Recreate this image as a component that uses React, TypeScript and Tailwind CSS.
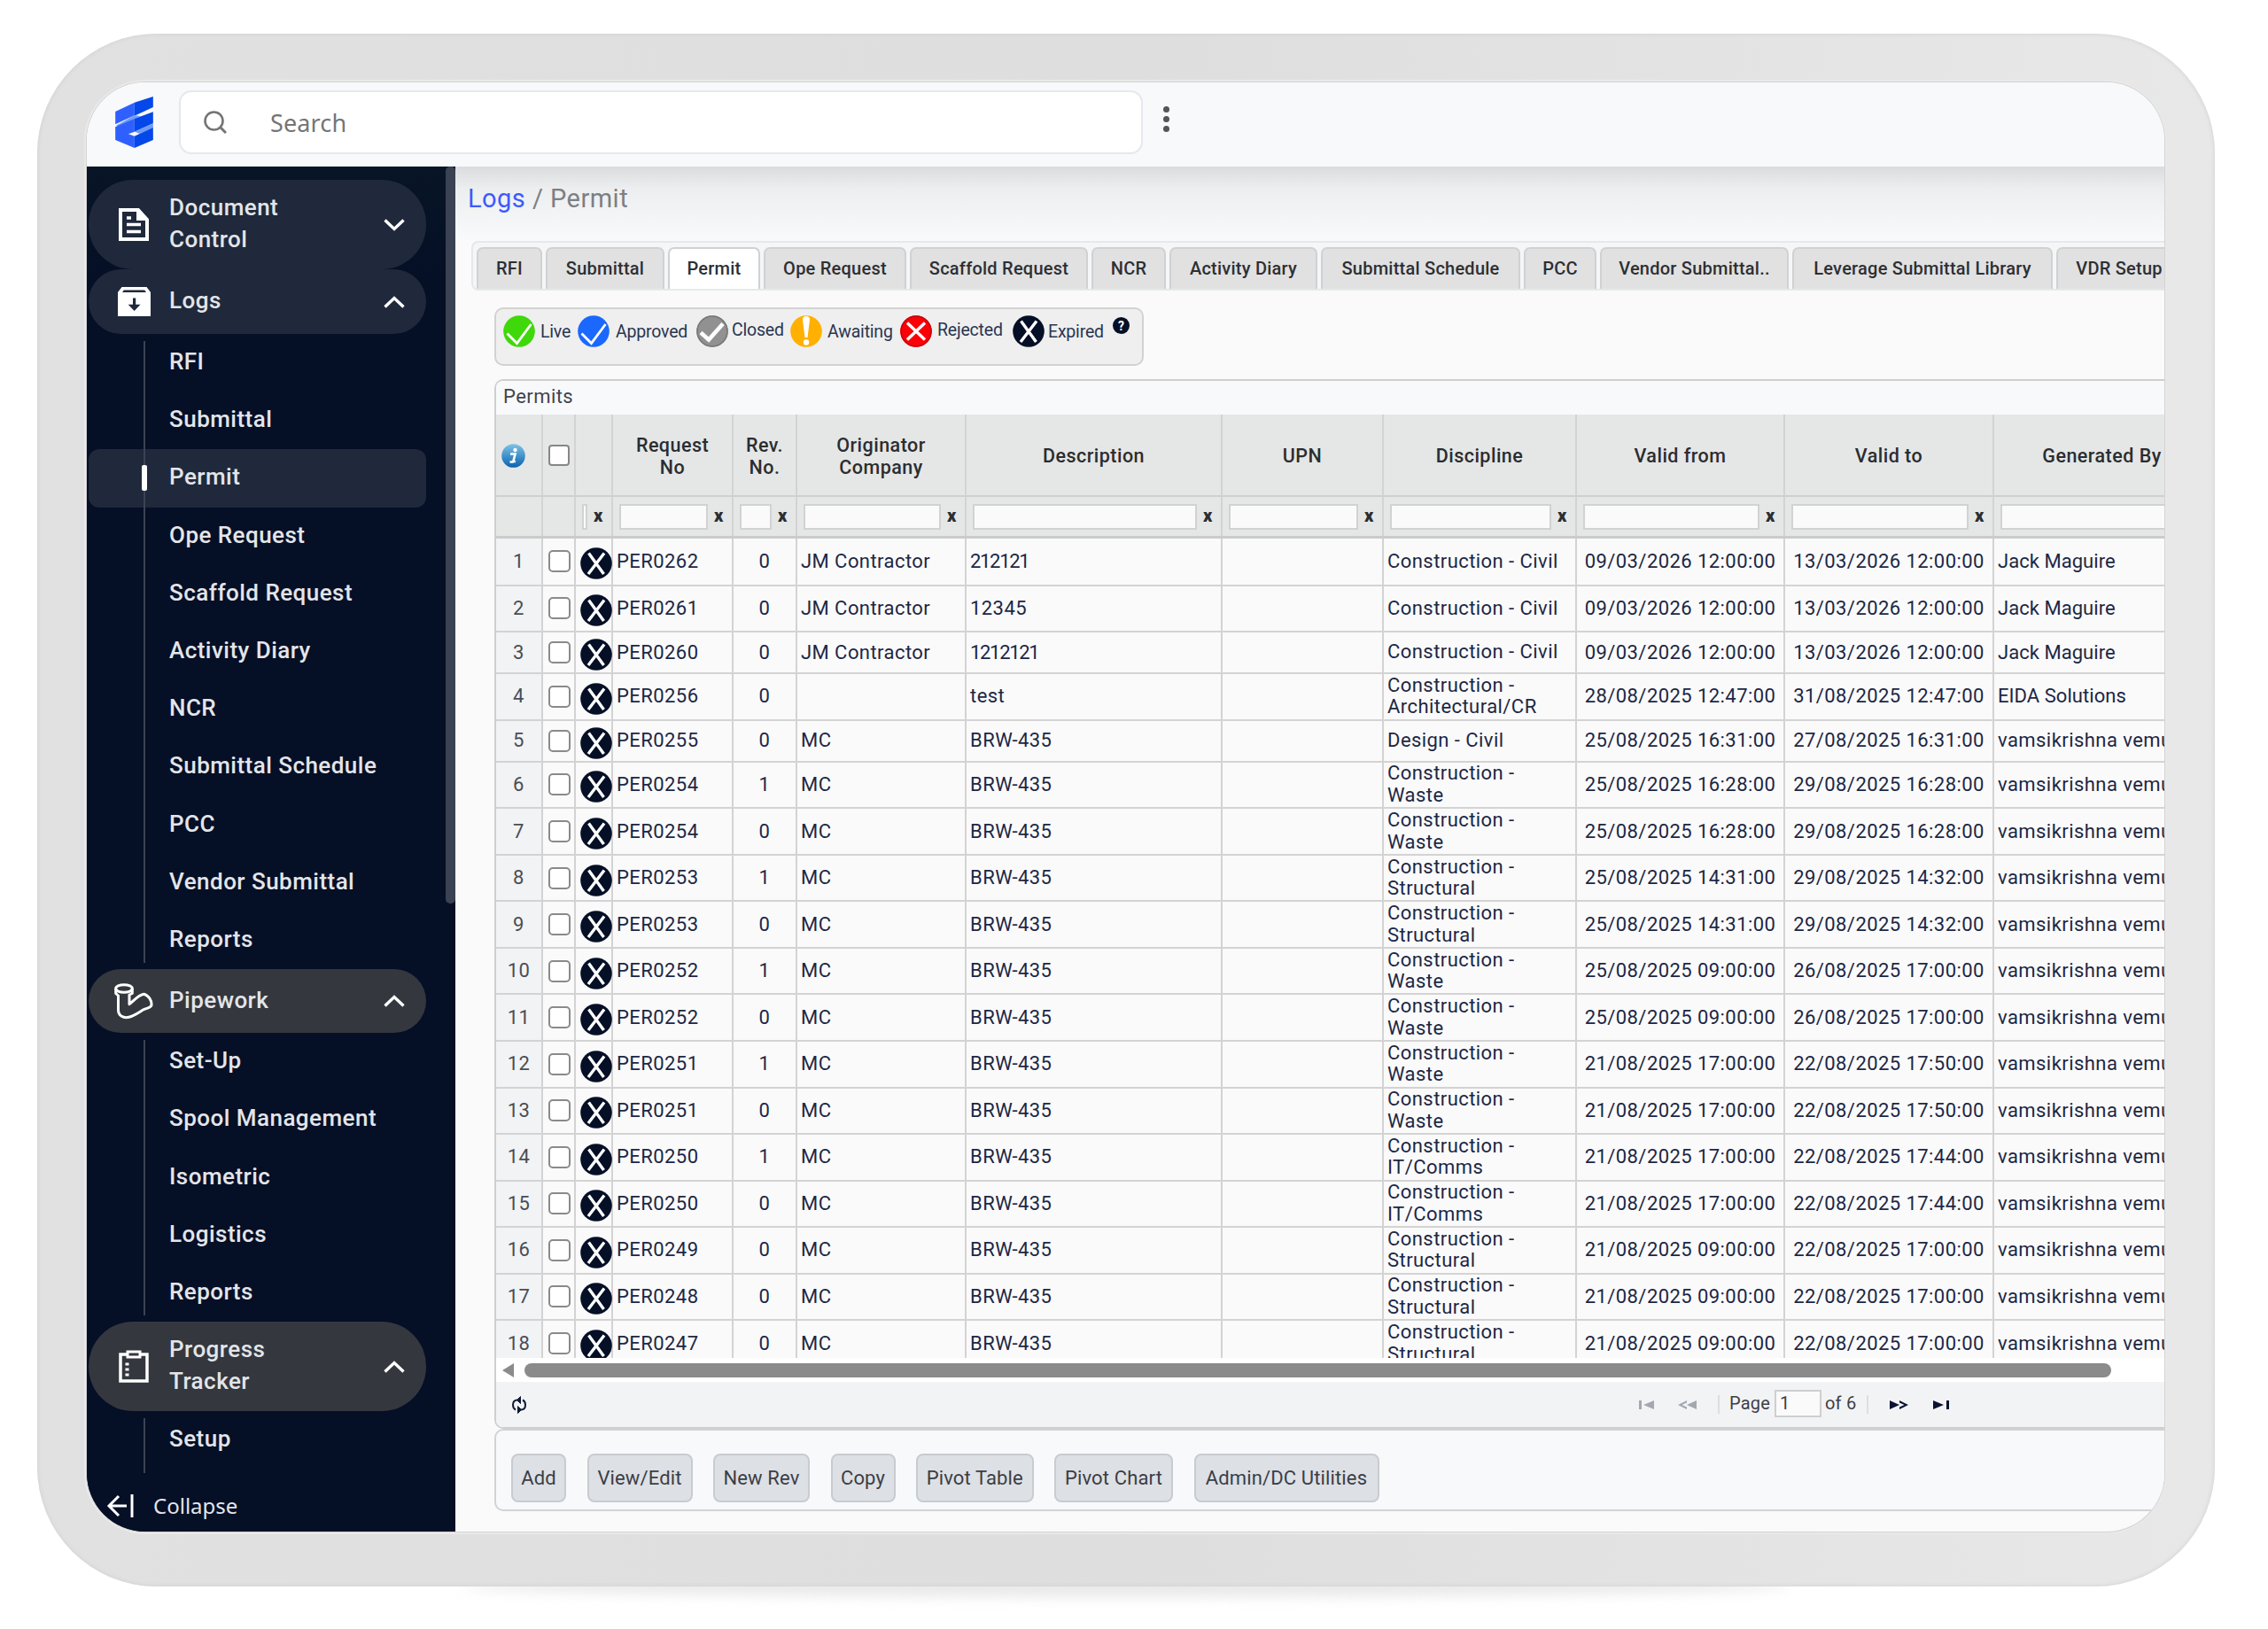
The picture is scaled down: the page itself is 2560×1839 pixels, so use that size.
import { ReactNode } from "react";
import clsx from "clsx";

const Logo = () => (
  <svg viewBox="0 0 128 174" className="h-[58px] w-[43px]">
    <path d="M0 51 65 20V64L0 94z" fill="#2f60ff" />
    <path d="M65 20 128 0V36L65 65z" fill="#0448ea" />
    <path d="M3 98 65 64 86 66 65 76 8 102z" fill="#6f9bf7" />
    <path d="M0 103 65 75V119L44 127 65 134V174L0 147z" fill="#2f60ff" />
    <path d="M65 75 128 52V91L65 119z" fill="#0448ea" />
    <path d="M65 119 128 91V106L65 134 86 127z" fill="#6f9bf7" />
    <path d="M65 134 128 105V147L65 174z" fill="#0448ea" />
  </svg>
);

const DocumentIcon = () => (
  <svg viewBox="0 0 34 37" className="h-[37px] w-[34px]" fill="none" stroke="#fff" strokeWidth="4">
    <path d="M2 2h20l10 11v22H2z" />
    <path d="M20 0v14h14L22 0z" fill="#fff" stroke="none" />
    <path d="M9 11h5M9 18.5h16M9 26.500h16" strokeWidth="3.600" />
  </svg>
);

const ArchiveIcon = () => (
  <svg viewBox="0 0 37 33" className="h-[33px] w-[37px]">
    <path d="M4.500 0h28L37 6v27H0V6z" fill="#fff" />
    <path d="M5 6l1.800-2.500h23.400L32 6z" fill="#1f293b" />
    <path d="M17 12.500h3.200v7.200h5.300L18.600 27l-6.900-7.300H17z" fill="#1f293b" />
  </svg>
);

const PipeIcon = () => (
  <svg viewBox="0 0 44 41" className="h-[41px] w-[44px]" fill="none" stroke="#fff" strokeWidth="3" strokeLinejoin="round">
    <ellipse cx="11" cy="6" rx="9.300" ry="4.300" />
    <path d="M1.700 6v5.500L4.500 14v16c0 7 6 9.800 12 8.300 6-1.600 11-5.300 16-8.300 3-1.700 9-1.800 9.500-5.500.4-5-3.500-11-8.500-12.300-6 .8-10 6-16.500 11.500V13l3.300-1.500V6" />
  </svg>
);

const ClipboardIcon = () => (
  <svg viewBox="0 0 34 37" className="h-[37px] w-[34px]" fill="none" stroke="#fff" strokeWidth="3.500">
    <path d="M2 5h30v30H2z" />
    <path d="M10 2h14v6H10z" fill="#34373e" strokeWidth="3" />
    <path d="M7.500 16h4M7.500 22h4M7.500 28h4" strokeWidth="3" />
  </svg>
);

const Chevron = ({ up }: { up?: boolean }) => (
  <svg viewBox="0 0 24 14" className="h-[14px] w-[24px]" fill="none" stroke="#fff" strokeWidth="3.400">
    <path d={up ? "M1.500 12.500 12 2.500l10.500 10" : "M1.500 1.500 12 11.500l10.500-10"} />
  </svg>
);

const StatusIcon = ({ kind }: { kind: string }) => {
  const fills: Record<string, string> = {
    Live: "#3fd80a",
    Approved: "#1b68ff",
    Closed: "#919191",
    Awaiting: "#ffb000",
    Rejected: "#fb0007",
    Expired: "#050f26",
  };
  return (
    <svg viewBox="0 0 36 36" className="h-[36px] w-[36px] shrink-0" fill="none" stroke="#fff">
      <circle cx="18" cy="18" r="17.800" fill={fills[kind]} stroke="none" />
      {(kind === "Live" || kind === "Approved") && <path d="M4.500 20.500 15.500 31.500 31.500 10" strokeWidth="2.800" />}
      {kind === "Closed" && (
        <>
          <circle cx="18" cy="18" r="17" stroke="#777" strokeWidth="1.500" />
          <path d="M5 19.500 14 27.500 30 9.500" strokeWidth="4.600" />
        </>
      )}
      {kind === "Awaiting" && (
        <>
          <path d="M14 5a4 4 0 0 1 8 0l-2.500 20h-3z" fill="#fff" stroke="none" />
          <circle cx="18" cy="30.500" r="3.200" fill="#fff" stroke="none" />
        </>
      )}
      {kind === "Rejected" && (
        <>
          <circle cx="18" cy="18" r="17" stroke="#c4060c" strokeWidth="1.500" />
          <path d="M8 8.500 28 27.500M28 8.500 8 27.500" strokeWidth="3.400" />
        </>
      )}
      {kind === "Expired" && <path d="M9.500 6.500 26.500 30M27 6.500 9 30" strokeWidth="3.400" />}
    </svg>
  );
};

interface NavGroup {
  label: string;
  icon: ReactNode;
  pill: string;
  open: boolean;
  items: string[];
}

const groups: NavGroup[] = [
  { label: "Document Control", icon: <DocumentIcon />, pill: "h-[101px] bg-[#1f293b]", open: false, items: [] },
  {
    label: "Logs",
    icon: <ArchiveIcon />,
    pill: "h-[73px] bg-[#1f293b]",
    open: true,
    items: ["RFI", "Submittal", "Permit", "Ope Request", "Scaffold Request", "Activity Diary", "NCR", "Submittal Schedule", "PCC", "Vendor Submittal", "Reports"],
  },
  {
    label: "Pipework",
    icon: <PipeIcon />,
    pill: "h-[72px] bg-[#34373e]",
    open: true,
    items: ["Set-Up", "Spool Management", "Isometric", "Logistics", "Reports"],
  },
  { label: "Progress Tracker", icon: <ClipboardIcon />, pill: "h-[101px] bg-[#34373e]", open: true, items: ["Setup"] },
];

const tabs = [
  { label: "RFI", size: "w-[74px]" },
  { label: "Submittal", size: "w-[134px]" },
  { label: "Permit", size: "w-[104px]", active: true },
  { label: "Ope Request", size: "w-[161px]" },
  { label: "Scaffold Request", size: "w-[201px]" },
  { label: "NCR", size: "w-[84px]" },
  { label: "Activity Diary", size: "w-[167px]" },
  { label: "Submittal Schedule", size: "w-[225px]" },
  { label: "PCC", size: "w-[82px]" },
  { label: "Vendor Submittal..", size: "w-[213px]" },
  { label: "Leverage Submittal Library", size: "w-[294px]" },
  { label: "VDR Setup", size: "w-[142px]" },
];

const legend = [
  { label: "Live", size: "w-[84px] gap-[6px]" },
  { label: "Approved", size: "w-[134px] gap-[7px]" },
  { label: "Closed", size: "w-[106px] gap-[4px]", raised: true },
  { label: "Awaiting", size: "w-[124px] gap-[6px]" },
  { label: "Rejected", size: "w-[127px] gap-[6px]", raised: true },
  { label: "Expired", size: "w-[113px] gap-[4px]" },
];

const grid =
  "grid w-[1936px] grid-cols-[53px_37px_42px_136px_72px_191px_289px_182px_218px_235px_236px_245px]";

const columns = [
  "Request\nNo",
  "Rev.\nNo.",
  "Originator\nCompany",
  "Description",
  "UPN",
  "Discipline",
  "Valid from",
  "Valid to",
  "Generated By",
];

const vk = "vamsikrishna vemuri";
const tall = "h-[52.56px]";

const rows: string[][] = [
  ["PER0262", "0", "JM Contractor", "212121", "Construction - Civil", "09/03/2026 12:00:00", "13/03/2026 12:00:00", "Jack Maguire", "h-[53.6px]"],
  ["PER0261", "0", "JM Contractor", "12345", "Construction - Civil", "09/03/2026 12:00:00", "13/03/2026 12:00:00", "Jack Maguire", tall],
  ["PER0260", "0", "JM Contractor", "1212121", "Construction - Civil", "09/03/2026 12:00:00", "13/03/2026 12:00:00", "Jack Maguire", "h-[47px]"],
  ["PER0256", "0", "", "test", "Construction -\nArchitectural/CR", "28/08/2025 12:47:00", "31/08/2025 12:47:00", "EIDA Solutions", tall],
  ["PER0255", "0", "MC", "BRW-435", "Design - Civil", "25/08/2025 16:31:00", "27/08/2025 16:31:00", vk, "h-[47px]"],
  ["PER0254", "1", "MC", "BRW-435", "Construction -\nWaste", "25/08/2025 16:28:00", "29/08/2025 16:28:00", vk, tall],
  ["PER0254", "0", "MC", "BRW-435", "Construction -\nWaste", "25/08/2025 16:28:00", "29/08/2025 16:28:00", vk, tall],
  ["PER0253", "1", "MC", "BRW-435", "Construction -\nStructural", "25/08/2025 14:31:00", "29/08/2025 14:32:00", vk, tall],
  ["PER0253", "0", "MC", "BRW-435", "Construction -\nStructural", "25/08/2025 14:31:00", "29/08/2025 14:32:00", vk, tall],
  ["PER0252", "1", "MC", "BRW-435", "Construction -\nWaste", "25/08/2025 09:00:00", "26/08/2025 17:00:00", vk, tall],
  ["PER0252", "0", "MC", "BRW-435", "Construction -\nWaste", "25/08/2025 09:00:00", "26/08/2025 17:00:00", vk, tall],
  ["PER0251", "1", "MC", "BRW-435", "Construction -\nWaste", "21/08/2025 17:00:00", "22/08/2025 17:50:00", vk, tall],
  ["PER0251", "0", "MC", "BRW-435", "Construction -\nWaste", "21/08/2025 17:00:00", "22/08/2025 17:50:00", vk, tall],
  ["PER0250", "1", "MC", "BRW-435", "Construction -\nIT/Comms", "21/08/2025 17:00:00", "22/08/2025 17:44:00", vk, tall],
  ["PER0250", "0", "MC", "BRW-435", "Construction -\nIT/Comms", "21/08/2025 17:00:00", "22/08/2025 17:44:00", vk, tall],
  ["PER0249", "0", "MC", "BRW-435", "Construction -\nStructural", "21/08/2025 09:00:00", "22/08/2025 17:00:00", vk, tall],
  ["PER0248", "0", "MC", "BRW-435", "Construction -\nStructural", "21/08/2025 09:00:00", "22/08/2025 17:00:00", vk, tall],
  ["PER0247", "0", "MC", "BRW-435", "Construction -\nStructural", "21/08/2025 09:00:00", "22/08/2025 17:00:00", vk, tall],
];

const actions = [
  { label: "Add", size: "w-[62px]" },
  { label: "View/Edit", size: "w-[119px]" },
  { label: "New Rev", size: "w-[109px]" },
  { label: "Copy", size: "w-[73px]" },
  { label: "Pivot Table", size: "w-[132.5px]" },
  { label: "Pivot Chart", size: "w-[134px]" },
  { label: "Admin/DC Utilities", size: "w-[209px]" },
];

const Header = () => (
  <header className="flex h-[95px] shrink-0 items-start bg-[#f8f9fb]">
    <div className="ml-[32px] mt-[16px] w-[43px]">
      <Logo />
    </div>
    <div className="ml-[29px] mt-[9px] flex h-[72px] w-[1088px] items-center rounded-[14px] border-2 border-[#e6e8ed] bg-white">
      <svg viewBox="0 0 26 26" className="ml-[26px] h-[26px] w-[26px]" fill="none" stroke="#757575" strokeWidth="2.600">
        <circle cx="11.500" cy="11.500" r="10" />
        <path d="M18.500 18.500 25 25" strokeWidth="3" />
      </svg>
      <span className="ml-[49px] font-['Noto_Sans'] text-[27px] leading-none tracking-[0.005em] text-[#757575]">Search</span>
    </div>
    <div className="ml-[23px] mt-[27px] flex flex-col gap-[4px]">
      <i className="h-[7px] w-[7px] rounded-full bg-[#555]" />
      <i className="h-[7px] w-[7px] rounded-full bg-[#555]" />
      <i className="h-[7px] w-[7px] rounded-full bg-[#555]" />
    </div>
  </header>
);

const Sidebar = () => (
  <aside className="relative flex w-[416px] shrink-0 flex-col overflow-hidden bg-[#050f26] bg-linear-to-b from-[#081526] to-[#050f26] to-[8%] text-[26px] font-medium tracking-[0.018em] text-[#e3e5e9]">
    <nav className="ml-[2px] mt-[15px] w-[381px]">
      {groups.map((g) => (
        <div key={g.label}>
          <div className={clsx("flex items-center rounded-[50px]", g.pill)}>
            <div className="flex w-[91px] shrink-0 justify-center pl-[11px]">{g.icon}</div>
            <span className="w-[160px] pb-[3px] leading-[36px]">{g.label}</span>
            <div className="ml-[82px]">
              <Chevron up={g.open} />
            </div>
          </div>
          {g.items.length > 0 && (
            <ul className="relative">
              <li
                className={clsx(
                  "absolute left-[62px] top-[8px] w-[2px] bg-[#3b4354]",
                  g.items.length === 1 ? "-bottom-[5px]" : "bottom-[7px]"
                )}
              />
              {g.items.map((item) => (
                <li
                  key={item}
                  className={clsx(
                    "flex h-[65.2px] items-center rounded-[12px] pb-[2px] pl-[91px]",
                    item === "Permit" && "bg-[#1f293b]"
                  )}
                >
                  {item === "Permit" && <i className="absolute left-[60px] h-[29px] w-[6px] translate-y-[1px] rounded-[2px] bg-white" />}
                  {item}
                </li>
              ))}
            </ul>
          )}
        </div>
      ))}
    </nav>
    <div className="mt-auto flex h-[57px] items-center pb-[1px] pl-[22px]">
      <svg viewBox="0 0 31 26" className="h-[26px] w-[31px]" fill="none" stroke="#fff" strokeWidth="3">
        <path d="M14 2 3 13l11 11M3 13h20M29 0v26" />
      </svg>
      <span className="ml-[22px] font-['Noto_Sans'] text-[24px] font-normal leading-none tracking-normal">Collapse</span>
    </div>
    <div className="absolute right-0 top-0 h-[832px] w-[11px] rounded-[5px] bg-[#3a4254]" />
  </aside>
);

const Tabs = () => (
  <div className="ml-[18px] flex h-[56px] shrink-0 gap-[4px] overflow-hidden rounded-l-[8px] border-2 border-r-0 border-[#e6e9e9] bg-[#f5f6f7] pl-[4px] pt-[5px] text-[20px] font-medium tracking-[0.012em] text-[#2e2f33]">
    {tabs.map((tab) => (
      <div
        key={tab.label}
        className={clsx(
          "flex h-[49px] shrink-0 items-center justify-center whitespace-nowrap rounded-t-[7px] border-2 border-b-0 border-[#d0d1d2] pb-[3px]",
          tab.active ? "bg-white" : "bg-[#e1e1e1]",
          tab.size
        )}
      >
        {tab.label}
      </div>
    ))}
  </div>
);

const Legend = () => (
  <div className="ml-[44px] mt-[19px] flex h-[66px] w-[733px] shrink-0 rounded-[10px] border-2 border-[#d2d2d2] bg-[#efefef] pl-[8px] pt-[7px] text-[19.5px] tracking-[-0.01em] text-[#2a3652]">
    {legend.map((l) => (
      <div key={l.label} className={clsx("flex h-[36px] items-center", l.size)}>
        <StatusIcon kind={l.label} />
        <span className={l.raised ? "-translate-y-[1px]" : "translate-y-[1px]"}>{l.label}</span>
      </div>
    ))}
    <span className="mt-[2px] flex h-[19px] w-[19px] items-center justify-center rounded-full bg-[#050f26] text-[14px] font-bold leading-none text-white">?</span>
  </div>
);

const InfoIcon = () => (
  <svg viewBox="0 0 27 27" className="h-[27px] w-[27px]">
    <defs>
      <linearGradient id="info" x1="0" y1="0" x2="0" y2="1">
        <stop offset="0" stopColor="#7fc3e6" />
        <stop offset="1" stopColor="#0a62b0" />
      </linearGradient>
    </defs>
    <circle cx="13.500" cy="13.500" r="13.300" fill="url(#info)" />
    <circle cx="15.500" cy="7" r="2.200" fill="#fff" />
    <path d="M10 11.500h5.500l-2.200 8.500h2.500M9.500 20.500h4" fill="none" stroke="#fff" strokeWidth="2.600" />
  </svg>
);

const cell = "flex h-full items-center border-r-2 border-[#d3d3d3]";

const TableHead = () => (
  <>
    <div className={clsx(grid, "h-[93px] border-b-2 border-[#cfcfcf] bg-[#e5e7e6] text-[21.5px] font-medium tracking-[0.022em] text-[#2b2d31]")}>
      <div className={clsx(cell, "pl-[6px] pt-[1px]")}>
        <InfoIcon />
      </div>
      <div className={clsx(cell, "justify-center pl-[1px]")}>
        <i className="h-[24px] w-[24px] rounded-[4px] border-2 border-[#868686] bg-white" />
      </div>
      <div className={cell} />
      {columns.map((c) => (
        <div key={c} className={clsx(cell, "justify-center whitespace-pre pt-[2px] text-center leading-[25px]")}>
          {c}
        </div>
      ))}
    </div>
    <div className={clsx(grid, "h-[47px] border-b-3 border-[#cbcbcb] bg-[#e5e7e6]")}>
      <div className={cell} />
      <div className={cell} />
      {["status", ...columns].map((c) => (
        <div key={c} className={clsx(cell, "pl-[7px]")}>
          <i className="h-[29px] min-w-[5px] flex-1 border-2 border-[#d2d2d2] bg-[#fafafa]" />
          <span className="w-[27px] shrink-0 pb-[2px] pl-[7px] text-[20px] font-black leading-none text-[#2b2d31]">x</span>
        </div>
      ))}
    </div>
  </>
);

const TableBody = () => (
  <div className="h-[925px] overflow-hidden text-[22px] font-[450] tracking-[0.02em] text-[#1c2745]">
    {rows.map((r, i) => (
      <div key={i} className={clsx(grid, "border-b-2 border-[#d3d3d3] bg-[#fafafa]", r[8])}>
        <div className={clsx(cell, "justify-center bg-[#f1f3f5] pb-[1px] text-[#4a4d54]")}>{i + 1}</div>
        <div className={clsx(cell, "justify-center pl-[1px]")}>
          <i className="h-[25px] w-[25px] rounded-[5px] border-2 border-[#8a8a8a] bg-white" />
        </div>
        <div className={clsx(cell, "pl-[5px] pt-[5px]")}>
          <StatusIcon kind="Expired" />
        </div>
        <div className={clsx(cell, "pb-[1px] pl-[4px]")}>{r[0]}</div>
        <div className={clsx(cell, "justify-center pb-[1px]")}>{r[1]}</div>
        <div className={clsx(cell, "pb-[1px] pl-[4px]")}>{r[2]}</div>
        <div className={clsx(cell, "pb-[1px] pl-[4px]", i !== 1 && i < 3 && "tracking-[-0.06em]")}>{r[3]}</div>
        <div className={cell} />
        <div className={clsx(cell, "whitespace-pre pl-[4px] leading-[24.5px]")}>{r[4]}</div>
        <div className={clsx(cell, "justify-center whitespace-nowrap pb-[1px]")}>{r[5]}</div>
        <div className={clsx(cell, "justify-center whitespace-nowrap pb-[1px]")}>{r[6]}</div>
        <div className={clsx(cell, "whitespace-nowrap pb-[1px] pl-[4px]", i < 4 && "tracking-[0.002em]")}>{r[7]}</div>
      </div>
    ))}
  </div>
);

const Pager = () => (
  <div className="flex h-[51px] items-center bg-[#f2f3f5] text-[20px] tracking-[0.01em] text-[#3d4047]">
    <svg viewBox="0 0 18 20" className="ml-[17px] h-[20px] w-[18px]" fill="none" stroke="#111b36" strokeWidth="2">
      <path d="M7 4.500C3 4.500 2 7 2 10s1 4.500 3 5.500M11 15.500c4 0 5-2.500 5-5.500s-1-4.500-3-5.500" />
      <path d="M6.500 4.500h4M10.500.500v8l-4-4zM11.500 15.500h-4M7.500 11.500v8l4-4z" fill="#111b36" strokeWidth="1" />
    </svg>
    <svg viewBox="0 0 17 10" className="ml-[1255px] h-[10px] w-[17px]" fill="#a3a7b0">
      <path d="M0 0h3v10H0zM17 0v10L5 5z" />
    </svg>
    <svg viewBox="0 0 21 10" className="ml-[27px] h-[10px] w-[21px]" fill="#a3a7b0">
      <path d="M21 0v10L10 5zM10 0v2.500L4.500 5 10 7.500V10L0 5z" />
    </svg>
    <i className="ml-[24px] h-[21px] w-[2px] bg-[#dcdee1]" />
    <span className="ml-[11px] w-[47px] pb-[4px]">Page</span>
    <span className="ml-[4px] flex h-[31px] w-[53px] -translate-y-[1px] items-center border-2 border-[#cfcfcf] bg-[#fafafa] pb-[2px] pl-[4px]">1</span>
    <span className="ml-[4px] w-[38px] whitespace-nowrap pb-[4px]">of 6</span>
    <i className="ml-[9px] h-[21px] w-[2px] bg-[#dcdee1]" />
    <svg viewBox="0 0 21 10" className="ml-[24px] h-[10px] w-[21px]" fill="#0a1330">
      <path d="M0 0v10L11 5zM11 0v2.500L16.500 5 11 7.500V10L21 5z" />
    </svg>
    <svg viewBox="0 0 18 10" className="ml-[28px] h-[10px] w-[18px]" fill="#0a1330">
      <path d="M0 0v10L12 5zM15 0h3v10h-3z" />
    </svg>
  </div>
);

const PermitsPanel = () => (
  <section className="ml-[44px] mt-[15px] h-[1185px] shrink-0 overflow-hidden rounded-l-[10px] border-2 border-r-0 border-[#cfcfcf] bg-white">
    <h2 className="flex h-[38px] items-center bg-[#f8f9fb] pb-[3px] pl-[8px] text-[22px] tracking-[0.02em] text-[#42454c]">Permits</h2>
    <TableHead />
    <TableBody />
    <div className="flex h-[27px] items-center">
      <svg viewBox="0 0 13 16" className="ml-[7px] h-[16px] w-[13px]" fill="#8b8b8b">
        <path d="M13 0v16L0 8z" />
      </svg>
      <i className="ml-[12px] h-[16px] w-[1791px] rounded-full bg-[#8b8b8b]" />
    </div>
    <Pager />
  </section>
);

export default function App() {
  return (
    <div className="h-[1839px] w-[2560px] overflow-hidden bg-white font-['Roboto',sans-serif] tracking-[0.025em]">
      <div className="relative ml-[42px] mt-[38px] h-[1753px] w-[2458px]">
        <div className="absolute inset-x-[480px] -bottom-[12px] h-[24px] rounded-[50%] bg-[#e9e9e9] blur-[7px]" />
        <div className="relative h-full rounded-[135px] bg-linear-to-r from-[#e1e1e1] via-[#dedede] to-[#e8e8e8] pl-[56px] pt-[55px] shadow-[inset_0_0_5px_#cfcfcf]">
          <div className="flex h-[1636px] w-[2345px] flex-col overflow-hidden rounded-[66px] bg-[#fafafa] shadow-[0_0_0_1px_#d3d3d3,0_0_0_3px_#e9e9e9]">
            <Header />
            <div className="flex h-[1541px]">
              <Sidebar />
              <main className="flex min-w-0 flex-1 flex-col overflow-hidden">
                <div className="flex h-[84px] shrink-0 bg-linear-to-b from-[#dbdcdf] via-[#edeeef] via-30% to-[#f9fafb] pl-[14px] pt-[16px] text-[29px] leading-[40px] tracking-[0.016em] text-[#7b8085]">
                  <span className="text-[#3d5afe]">Logs</span>
                  <span className="whitespace-pre"> / Permit</span>
                </div>
                <Tabs />
                <Legend />
                <PermitsPanel />
                <div className="ml-[44px] flex h-[93px] shrink-0 gap-[23.5px] rounded-l-[10px] border-2 border-r-0 border-[#d3d3d3] bg-[#f8f9fb] pl-[17px] pt-[26px] text-[22px] text-[#3b3e45]">
                  {actions.map((a) => (
                    <button
                      key={a.label}
                      className={clsx("h-[55px] shrink-0 whitespace-nowrap rounded-[8px] border-2 border-[#c8cbd0] bg-[#dde0e5] tracking-[0.006em]", a.size)}
                    >
                      {a.label}
                    </button>
                  ))}
                </div>
              </main>
            </div>
          </div>
        </div>
      </div>
    </div>
  );
}
